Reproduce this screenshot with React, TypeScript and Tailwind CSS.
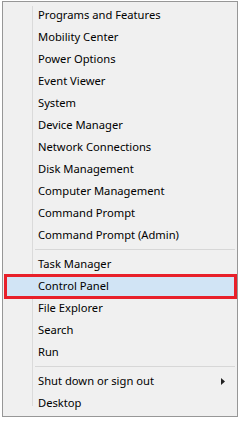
type Item = { label: string; active?: boolean; submenu?: boolean };

const groups: Item[][] = [
  [
    { label: 'Programs and Features' },
    { label: 'Mobility Center' },
    { label: 'Power Options' },
    { label: 'Event Viewer' },
    { label: 'System' },
    { label: 'Device Manager' },
    { label: 'Network Connections' },
    { label: 'Disk Management' },
    { label: 'Computer Management' },
    { label: 'Command Prompt' },
    { label: 'Command Prompt (Admin)' },
  ],
  [
    { label: 'Task Manager' },
    { label: 'Control Panel', active: true },
    { label: 'File Explorer' },
    { label: 'Search' },
    { label: 'Run' },
  ],
  [{ label: 'Shut down or sign out', submenu: true }, { label: 'Desktop' }],
];

function MenuRow({ item }: { item: Item }) {
  return (
    <div
      className={`relative flex h-[22px] items-center pl-[33px] pr-[10px] ${
        item.active ? 'bg-[#d1e4f5]' : ''
      }`}
    >
      <span className="flex-1 text-[11.2px] leading-none text-black">{item.label}</span>
      {item.submenu && (
        <svg width="4" height="7" viewBox="0 0 4 7">
          <path d="M0 0 L4 3.5 L0 7 Z" fill="#222" />
        </svg>
      )}
      {item.active && (
        <div className="pointer-events-none absolute -top-[1px] -left-[1px] -right-[2px] -bottom-[2px] border-[3px] border-[#e8202a]" />
      )}
    </div>
  );
}

export default function App() {
  return (
    <div className="h-[422px] w-[242px] bg-white pl-[2px] pt-[1px]" style={{ fontFamily: '"Noto Sans", "Open Sans", sans-serif' }}>
      <div className="relative w-[236px] border border-[#979797] bg-[#f0f0f0] px-[2px] py-[2px]">
        <div className="absolute top-[4px] bottom-[10px] left-[29px] w-px bg-[#dadada]" />
        {groups.map((group, gi) => (
          <div key={gi}>
            {gi > 0 && (
              <div className="flex h-[7px] items-center pl-[30px]">
                <div className="h-px w-full bg-[#d7d7d7]" />
              </div>
            )}
            {group.map((item) => (
              <MenuRow key={item.label} item={item} />
            ))}
          </div>
        ))}
      </div>
    </div>
  );
}
